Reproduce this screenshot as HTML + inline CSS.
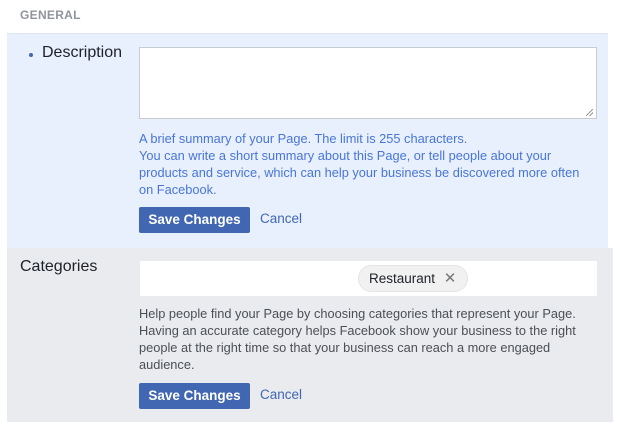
<!DOCTYPE html>
<html><head><style>
body{margin:0;width:620px;height:430px;background:#fff;font-family:"Liberation Sans",Arial,sans-serif;position:relative;overflow:hidden}
.a{position:absolute}
.help{font-size:12.8px;line-height:17px}
.btn{background:#4267b2;color:#fff;font-weight:bold;font-size:13.5px;border-radius:2px;text-align:center;line-height:26px}
.cancel{font-size:13.5px;color:#4267b2}
</style></head><body>
<div class="a" style="left:20px;top:8px;font-size:12px;font-weight:bold;color:#90949c;letter-spacing:.3px">GENERAL</div>
<div class="a" style="left:7px;top:33px;width:601px;height:214px;background:#e7f0fc;border-top:1px solid #dde6f2"></div>
<div class="a" style="left:7px;top:248px;width:606px;height:174px;background:#e9ebee"></div>
<div class="a" style="left:29px;top:53px;width:4px;height:4px;border-radius:50%;background:#4267b2"></div>
<div class="a" style="left:42px;top:44px;font-size:16px;color:#1d2129">Description</div>
<div class="a" style="left:139px;top:47px;width:456px;height:70px;background:#fff;border:1px solid #c8ccd2"></div>
<div class="a" style="left:586px;top:109px;width:7px;height:7px;background:linear-gradient(135deg,transparent 45%,#999 46%,#999 54%,transparent 55%,transparent 70%,#999 71%,#999 79%,transparent 80%)"></div>
<div class="a help" style="left:139px;top:130px;color:#4a75d8;width:475px">A brief summary of your Page. The limit is 255 characters.<br>You can write a short summary about this Page, or tell people about your<br>products and service, which can help your business be discovered more often<br>on Facebook.</div>
<div class="a btn" style="left:139px;top:207px;width:111px;height:26px">Save Changes</div>
<div class="a cancel" style="left:260px;top:211px">Cancel</div>
<div class="a" style="left:20px;top:258px;font-size:16px;color:#1d2129">Categories</div>
<div class="a" style="left:140px;top:261px;width:457px;height:35px;background:#fff"></div>
<div class="a" style="left:358px;top:265px;width:110px;height:27px;border-radius:14px;background:#f1f1f1;border:1px solid #e4e4e4;font-size:13.5px;color:#1d2129;line-height:26px;padding-left:10px;box-sizing:border-box">Restaurant <span style="color:#777;font-size:15px;margin-left:5px">✕</span></div>
<div class="a help" style="left:139px;top:305px;color:#4b4f56;width:475px">Help people find your Page by choosing categories that represent your Page.<br>Having an accurate category helps Facebook show your business to the right<br>people at the right time so that your business can reach a more engaged<br>audience.</div>
<div class="a btn" style="left:139px;top:383px;width:111px;height:26px">Save Changes</div>
<div class="a cancel" style="left:260px;top:387px">Cancel</div>
</body></html>
